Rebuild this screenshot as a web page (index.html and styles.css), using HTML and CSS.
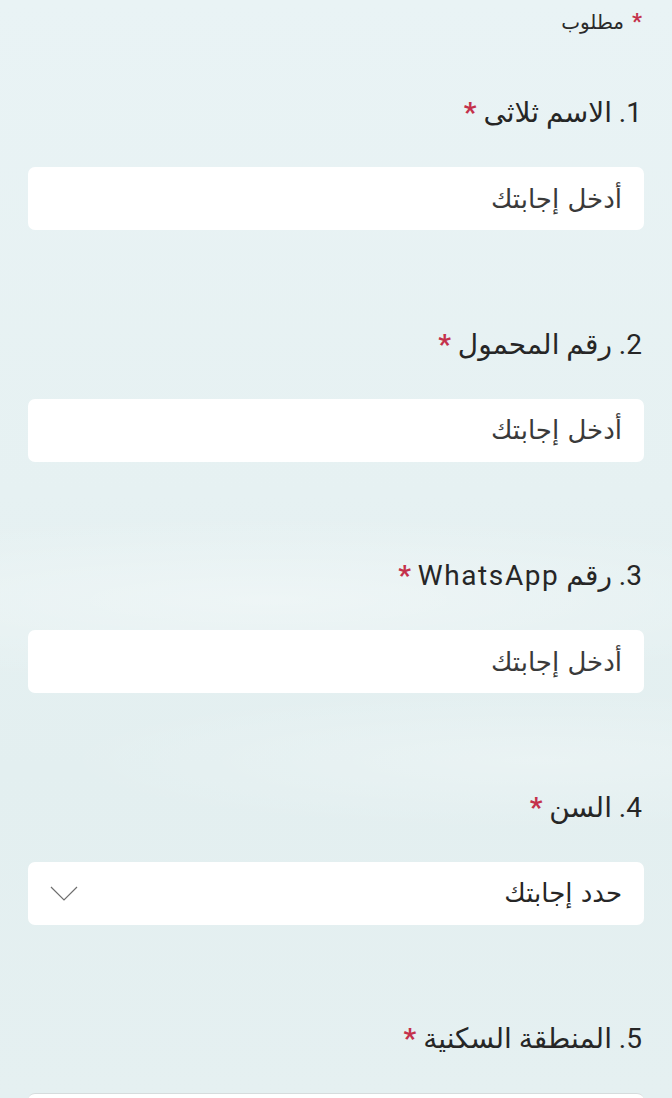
FILE: index.html
```html
<!DOCTYPE html>
<html lang="ar" dir="rtl">
<head>
<meta charset="utf-8">
<title>Form</title>
<link rel="stylesheet" href="styles.css">
</head>
<body>
<div class="page">
  <div class="required"><span class="star">*</span> مطلوب</div>

  <div class="question">
    <div class="label"><span class="num">1.</span> الاسم ثلاثى <span class="star">*</span></div>
    <div class="input"><span class="placeholder">أدخل إجابتك</span></div>
  </div>

  <div class="question">
    <div class="label"><span class="num">2.</span> رقم المحمول <span class="star">*</span></div>
    <div class="input"><span class="placeholder">أدخل إجابتك</span></div>
  </div>

  <div class="question">
    <div class="label"><span class="num">3.</span> رقم <span class="latin" dir="ltr">WhatsApp</span> <span class="star">*</span></div>
    <div class="input"><span class="placeholder">أدخل إجابتك</span></div>
  </div>

  <div class="question">
    <div class="label"><span class="num">4.</span> السن <span class="star">*</span></div>
    <div class="input select"><span class="placeholder select-text">حدد إجابتك</span>
      <svg class="chevron" width="28" height="15" viewBox="0 0 28 15"><path d="M1 1 L14 14 L27 1" fill="none" stroke="#6e6e6e" stroke-width="1.2"/></svg>
    </div>
  </div>

  <div class="question">
    <div class="label"><span class="num">5.</span> المنطقة السكنية <span class="star">*</span></div>
    <div class="input last"><span class="placeholder">أدخل إجابتك</span></div>
  </div>
</div>
</body>
</html>
```

FILE: styles.css
```css
html, body {
  margin: 0;
  padding: 0;
}
body {
  background:
    radial-gradient(ellipse 900px 120px at 40% 600px, rgba(255,255,255,0.35), rgba(255,255,255,0) 70%),
    radial-gradient(ellipse 700px 100px at 80% 760px, rgba(255,255,255,0.25), rgba(255,255,255,0) 70%),
    linear-gradient(180deg, #e9f3f5 0%, #e6f1f2 45%, #e3eff0 70%, #e5f0f1 100%);
  height: 1098px;
  font-family: Roboto, "DejaVu Sans", sans-serif;
  color: #242424;
  overflow: hidden;
}
.page {
  display: flex;
  flex-direction: column;
  padding: 10px 28px 0 28px;
}
.required {
  font-size: 20px;
  line-height: 24px;
  padding-right: 2px;
  color: #2a2a2a;
  word-spacing: 3px;
}
.required .star {
  font-size: 22px;
}
.star {
  color: #c4314b;
  font-weight: 700;
}
.question {
  display: flex;
  flex-direction: column;
  gap: 36px;
  margin-top: 61px;
}
.question + .question {
  margin-top: 96.6px;
}
.label {
  font-size: 28px;
  line-height: 36px;
  padding-right: 2px;
  color: #262626;
}
.latin {
  letter-spacing: 1.6px;
}
.input {
  background: #ffffff;
  border-radius: 7px;
  height: 63px;
  flex: none;
  display: flex;
  align-items: center;
  padding: 0 22px;
}
.input.last {
  border-top: 1px solid #d6dcdd;
}
.placeholder {
  font-family: "DejaVu Sans", sans-serif;
  font-size: 26px;
  color: #3a3a3a;
}
.select {
  justify-content: space-between;
}
.select-text {
  color: #262626;
}
.chevron {
  display: block;
}
```
